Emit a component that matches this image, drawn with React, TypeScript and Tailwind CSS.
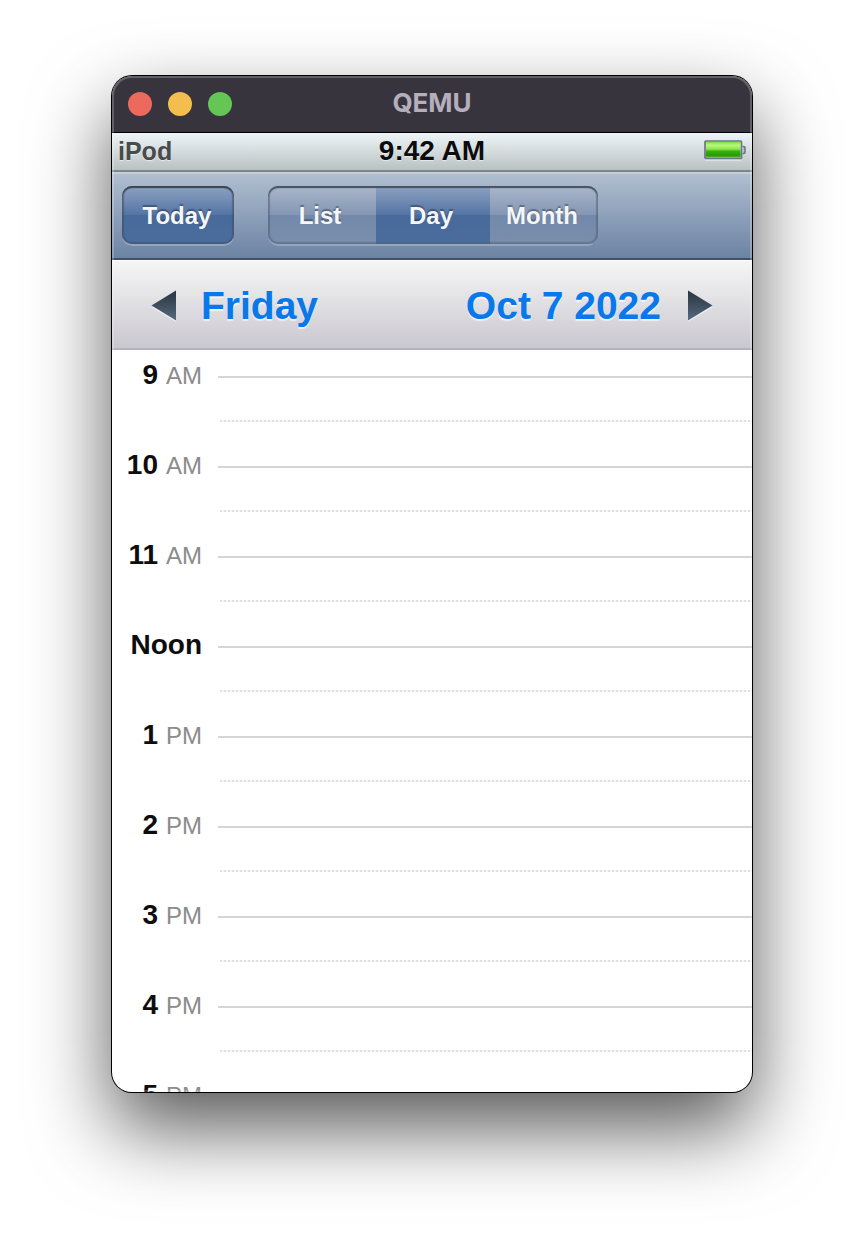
import { useState } from "react";

type Hour = { value: string; period?: string };

const HOURS: Hour[] = [
  { value: "9", period: "AM" },
  { value: "10", period: "AM" },
  { value: "11", period: "AM" },
  { value: "Noon" },
  { value: "1", period: "PM" },
  { value: "2", period: "PM" },
  { value: "3", period: "PM" },
  { value: "4", period: "PM" },
  { value: "5", period: "PM" },
];

const VIEWS = ["List", "Day", "Month"];

function TitleBar() {
  return (
    <header className="grid h-[57px] shrink-0 grid-cols-[1fr_auto_1fr] items-center border-b border-black bg-[#38343e] px-4">
      <div className="flex gap-4">
        <button aria-label="Close" className="size-6 rounded-full bg-[#ec695e]" />
        <button aria-label="Minimize" className="size-6 rounded-full bg-[#f4be4f]" />
        <button aria-label="Zoom" className="size-6 rounded-full bg-[#65c656]" />
      </div>
      <h1 className="pb-0.5 font-['Inter',sans-serif] text-[26px] leading-8 font-bold text-[#b5afbd]">QEMU</h1>
    </header>
  );
}

function Battery() {
  return (
    <svg width="42" height="22" viewBox="0 0 42 22" role="img" aria-label="Battery full">
      <defs>
        <linearGradient id="charge" x1="0" y1="0" x2="0" y2="1">
          <stop offset="0" stopColor="#7fdd45" />
          <stop offset="0.2" stopColor="#b9f77d" />
          <stop offset="0.45" stopColor="#8eea4e" />
          <stop offset="0.6" stopColor="#39b010" />
          <stop offset="0.85" stopColor="#2a9a06" />
          <stop offset="1" stopColor="#4fae2c" />
        </linearGradient>
      </defs>
      <path d="M1 21h36" stroke="#fff" strokeOpacity="0.5" strokeWidth="1.500" />
      <rect x="1" y="2" width="36.500" height="17.500" rx="1" fill="#c8d6c8" stroke="#69758b" strokeWidth="1.700" />
      <rect x="2" y="3" width="34.500" height="15.500" fill="url(#charge)" />
      <path d="M38.500 7.500h1.200q1.300 0 1.300 1.300v4.400q0 1.300-1.300 1.300h-1.200" fill="#b4bcc8" stroke="#6b768c" strokeWidth="1.600" />
    </svg>
  );
}

function StatusBar() {
  return (
    <div className="grid h-[39px] shrink-0 grid-cols-[1fr_auto_1fr] items-center border-b-2 border-[#7d8588] bg-linear-to-b from-[#eef5f8] to-[#b9c2c3] px-1.5 pb-0.5">
      <span className="text-[25px] leading-8 font-bold text-[#484a4b] [text-shadow:0_1px_1px_#ffffff90]">iPod</span>
      <time className="text-[28px] leading-8 font-bold text-[#0c0c0c] [text-shadow:0_1px_1px_#ffffff90]">9:42 AM</time>
      <span className="justify-self-end pb-0.5">
        <Battery />
      </span>
    </div>
  );
}

const NORMAL = "bg-[linear-gradient(#a9b7ca,#8496b3_50%,#7389ab_50%,#7a8fac)]";
const PRESSED = "bg-[linear-gradient(#8da2c1,#5474a5_50%,#476a9b_50%,#4b6d9d)]";
const BUTTON_TEXT =
  "pt-0.5 text-2xl leading-8 font-bold text-[#f4f6f9] [text-shadow:0_-2px_1px_#00000050]";
const FRAME =
  "rounded-[10px] shadow-[0_2px_0_#ffffff38,inset_0_2px_1px_#3d4552,inset_0_0_1px_2px_#3f4c6488]";

function Toolbar() {
  const [view, setView] = useState("Day");
  return (
    <nav className="flex h-[88px] shrink-0 items-center gap-[34px] border-b-2 border-[#414e64] bg-linear-to-b from-[#b2c0d1] to-[#6c83a3] px-2.5 shadow-[inset_0_2px_0_#c3cddb]">
      <button className={`h-[58px] w-28 pr-0.5 ${FRAME} ${PRESSED} ${BUTTON_TEXT}`}>Today</button>
      <div
        role="group"
        aria-label="Calendar view"
        className="relative grid h-[58px] w-[330px] grid-cols-[108px_114px_108px] rounded-[10px] shadow-[0_2px_0_#ffffff38]"
      >
        {VIEWS.map((name) => (
          <button
            key={name}
            aria-pressed={view === name}
            onClick={() => setView(name)}
            className={`pr-1 first:rounded-l-[10px] last:rounded-r-[10px] last:pr-0 ${view === name ? PRESSED : NORMAL} ${BUTTON_TEXT}`}
          >
            {name}
          </button>
        ))}
        <span className="pointer-events-none absolute inset-0 rounded-[10px] shadow-[inset_0_2px_1px_#3d4552cc,inset_0_0_1px_2px_#4f5c7480]" />
      </div>
    </nav>
  );
}

function Arrow({ path, id, label }: { path: string; id: string; label: string }) {
  return (
    <button aria-label={label} className="pt-1">
      <svg width="26" height="32" viewBox="0 0 26 32" aria-hidden="true">
        <defs>
          <linearGradient id={id} x1="0" y1="0" x2="0" y2="1">
            <stop offset="0" stopColor="#28333f" />
            <stop offset="1" stopColor="#566a80" />
          </linearGradient>
        </defs>
        <path d={path} fill="#fff" fillOpacity="0.6" transform="translate(0 1.500)" />
        <path d={path} fill={`url(#${id})`} />
      </svg>
    </button>
  );
}

function DateBar() {
  return (
    <div className="flex h-[90px] shrink-0 items-center justify-between border-b-2 border-[#b2b3bf] bg-linear-to-b from-[#f6f6f6] to-[#cac8cf] px-[39px] text-[39px] leading-[48px] font-bold text-[#0878ea] shadow-[inset_0_1px_0_#fff]">
      <div className="flex items-center gap-6">
        <Arrow id="previous-day" label="Previous day" path="M0.500 15.500 25 0.500v30z" />
        <span className="pt-1 [text-shadow:0_2px_1px_#ffffffa0]">Friday</span>
      </div>
      <div className="flex items-center gap-[26px]">
        <time className="pt-1 [text-shadow:0_2px_1px_#ffffffa0]" dateTime="2022-10-07">
          Oct 7 2022
        </time>
        <Arrow id="next-day" label="Next day" path="M25.500 15.500 1 0.500v30z" />
      </div>
    </div>
  );
}

function HourRow({ value, period }: Hour) {
  return (
    <li className="flex h-[90px] shrink-0 gap-4">
      <div className="flex w-[90px] shrink-0 items-baseline justify-end gap-2 pt-[9px] leading-8">
        <span className="text-[28px] font-bold text-[#0d0d0d]">{value}</span>
        {period && <span className="text-2xl text-[#8b8b8b]">{period}</span>}
      </div>
      <div className="flex-1 pt-[26px]">
        <div className="h-0.5 bg-[#d5d5d5]" />
        <div className="mt-[42px] ml-0.5 h-0.5 bg-[repeating-linear-gradient(90deg,#e0e0e0_0_2px,#f7f7f7_2px_4px)]" />
      </div>
    </li>
  );
}

export default function App() {
  return (
    <main className="flex h-screen flex-col overflow-hidden bg-white px-28 pt-[76px] pb-[148px] font-['Liberation_Sans',Arial,sans-serif]">
      <section className="relative flex min-h-0 flex-1 flex-col overflow-hidden rounded-[20px] bg-white shadow-[0_0_0_1px_#000,0_36px_80px_#000000a8]">
        <TitleBar />
        <StatusBar />
        <Toolbar />
        <DateBar />
        <ol className="flex min-h-0 flex-1 flex-col overflow-hidden">
          {HOURS.map((hour) => (
            <HourRow key={hour.value} {...hour} />
          ))}
        </ol>
        <span className="pointer-events-none absolute inset-0 rounded-[20px] shadow-[inset_0_0_0_2px_#ffffff38]" />
      </section>
    </main>
  );
}
